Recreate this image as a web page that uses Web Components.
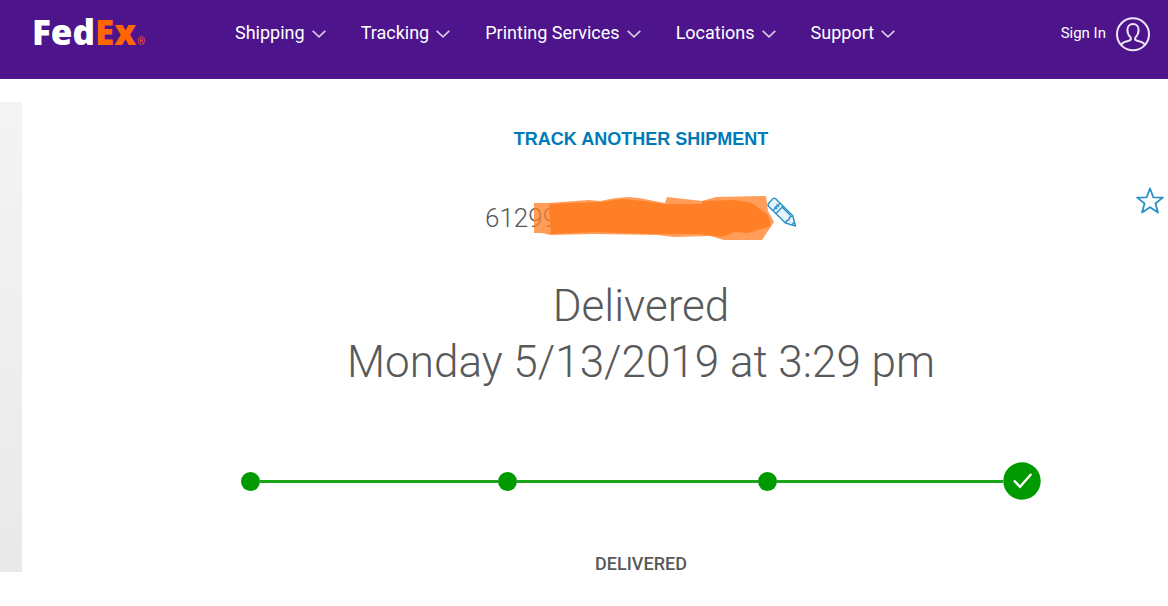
<!DOCTYPE html>
<html lang="en">
<head>
<meta charset="utf-8">
<meta name="viewport" content="width=device-width, initial-scale=1">
<title>FedEx Tracking</title>
<style>
body { margin: 0; background: #fff; color: #58595b; font-family: Roboto, "Liberation Sans", sans-serif; }
</style>
</head>
<body>
<tracking-page></tracking-page>
<script>
const define = (name, html) => customElements.define(name, class extends HTMLElement {
  constructor() {
    super();
    this.attachShadow({ mode: 'open' }).innerHTML = html;
  }
});

define('brand-logo', `
<style>
:host { display: block; }
a { display: flex; align-items: baseline; color: #fff; text-decoration: none; font: 800 35px/40px "Open Sans", sans-serif; }
.ex, small { color: #f60; }
small { font: 400 10px/12px Roboto, sans-serif; margin-left: 1px; }
</style>
<a href="#"><span>Fed</span><span class="ex">Ex</span><small>®</small></a>`);

define('nav-item', `
<style>
:host { display: block; }
button { display: flex; align-items: center; gap: 7px; margin: 0; padding: 0; border: 0; background: none; color: #fff; font: 400 18px/24px Roboto, sans-serif; white-space: nowrap; cursor: pointer; }
svg { display: block; margin-top: 2px; }
</style>
<button type="button"><slot></slot><svg width="14" height="8" viewBox="0 0 14 8" fill="none" stroke="#d8cbe6" stroke-width="1.6" aria-hidden="true"><path d="M.7.8 7 6.8 13.3.8"/></svg></button>`);

define('sign-in', `
<style>
:host { display: block; margin-left: auto; }
a { display: flex; align-items: flex-start; gap: 10px; color: #fff; text-decoration: none; font: 400 15px/32px Roboto, sans-serif; white-space: nowrap; }
svg { display: block; }
</style>
<a href="#"><slot></slot><svg width="34" height="35" viewBox="0 0 34 35" fill="none" stroke="#ece5f3" stroke-width="2" aria-hidden="true"><circle cx="17" cy="17.3" r="16"/><path d="M5 28.300C6.200 24.800 9 24.600 12 24C15 23.400 15.600 22.200 14.500 20.400C12.300 18.200 11.400 15.800 11.400 13C11.400 9.300 13.700 7 17 7s5.600 2.300 5.600 6c0 2.800-.9 5.200-3.100 7.400-1.100 1.800-.5 3 2.500 3.600 3 .6 5.800.8 7 4.300"/></svg></a>`);

define('site-header', `
<style>
:host { display: flex; align-items: flex-start; box-sizing: border-box; min-height: 79px; padding: 12px 18px 0 32px; background: #4d148c; }
nav { display: flex; gap: 35px; margin-top: 9px; }
brand-logo { flex: 0 0 203px; }
sign-in { margin-top: 5px; }
</style>
<brand-logo></brand-logo>
<nav aria-label="Main">
<nav-item>Shipping</nav-item><nav-item>Tracking</nav-item><nav-item>Printing Services</nav-item><nav-item>Locations</nav-item><nav-item>Support</nav-item>
</nav>
<sign-in>Sign In</sign-in>`);

define('tracking-number', `
<style>
:host { display: flex; justify-content: space-between; position: relative; width: 312px; height: 46px; margin: 0 auto; }
span { font: 300 26px/44px Roboto, sans-serif; }
.mask { position: absolute; left: 49px; top: 0; }
button { position: relative; align-self: flex-start; padding: 0; border: 0; background: none; cursor: pointer; }
svg { display: block; }
</style>
<span><slot></slot></span>
<svg class="mask" width="240" height="46" viewBox="0 0 240 46" aria-hidden="true">
<path fill="#ff7f27" fill-opacity=".77" d="M0 7H14L55 4 66 5 82 2 95 1 105 2 131 7 133 1 168 5 182 1 232 0 234 15 240 26 228 44H190L176 40 140 41 123 39 60 38 16 39 8 37 0 37Z"/>
<path fill="#ff7f27" d="M15 8 40 7 68 6 88 3 110 5 130 8 168 8V5L200 4 218 7 234 19 237 30 214 37 201 36 188 41 165 38 122 38 60 36 17 38Z"/>
</svg>
<button type="button" aria-label="Edit nickname"><svg width="30" height="32" viewBox="0 0 30 32" fill="none" stroke="#2b8fc7" stroke-width="1.4" stroke-linejoin="round" aria-hidden="true"><path fill="#e6f3fa" d="M1.500 7.500 6 2.600Q7.400 1.600 8.600 2.800L25.800 19.700 28.500 30 18.700 27.200 1.700 10.400Q.4 9 1.500 7.500Z"/><path d="M6 14.500 13 7.200M9 17.500 16 10.300M7.500 10.500 10 13M9.500 8.500 12 11M15 11 23.500 19.500M18.700 27.200Q18.500 24.700 21.800 23.900 22 20.500 25.800 19.700M24.600 28.900 27.500 26.100"/></svg></button>`);

define('favorite-button', `
<style>
:host { display: block; }
button { display: block; padding: 0; border: 0; background: none; cursor: pointer; }
svg { display: block; }
</style>
<button type="button" aria-label="Add to watch list"><svg width="28" height="28" viewBox="0 0 28 28" fill="none" stroke="#2b8fc7" stroke-width="1.8" stroke-linejoin="round" aria-hidden="true"><path d="M14 1.500 17.300 10.300 26.800 10.600 19.400 16.500 22 25.500 14 20.200 6 25.500 8.600 16.500 1.200 10.600 10.700 10.300Z"/></svg></button>`);

define('shipment-progress', `
<style>
:host { display: flex; align-items: center; max-width: 800px; margin: 0 auto; }
i { flex: none; width: 19px; height: 19px; border-radius: 50%; background: #090; }
b { flex: 238 1 0; height: 3px; background: #1ba51b; }
b.second { flex-grow: 242; }
b.last { flex-grow: 226; }
svg { flex: none; display: block; }
</style>
<i></i><b></b><i></i><b class="second"></b><i></i><b class="last"></b>
<svg width="38" height="38" viewBox="0 0 38 38" role="img" aria-label="Delivered"><circle cx="19" cy="19" r="18.700" fill="#090"/><path d="M11 18.500 17 24.800 28.300 12" fill="none" stroke="#fff" stroke-width="2.400"/></svg>`);

define('tracking-page', `
<style>
:host { display: block; }
.body { display: flex; padding: 23px 0 34px; }
aside { flex: 0 0 22px; background: linear-gradient(#f4f4f4, #e9e9e9); }
main { flex: 1; box-sizing: border-box; padding: 26px 0 0 92px; text-align: center; }
.track { display: block; width: fit-content; margin: 0 auto 46px; color: #007ab7; text-decoration: none; font: 700 18px/22px "Liberation Sans", sans-serif; }
.number { display: grid; grid-template-columns: 1fr; align-items: start; }
.number > * { grid-area: 1 / 1; }
favorite-button { justify-self: end; margin-right: 4px; margin-top: -9px; }
h1 { margin: 36px 0 72px; font: 300 44px/56px Roboto, sans-serif; }
h1 span { display: block; }
h2 { margin: 56px 0 0; font: 500 18px/16px Roboto, sans-serif; }
</style>
<site-header></site-header>
<div class="body">
<aside></aside>
<main>
<a class="track" href="#">TRACK ANOTHER SHIPMENT</a>
<div class="number"><tracking-number>61299</tracking-number><favorite-button></favorite-button></div>
<h1><span>Delivered</span><span>Monday 5/13/2019 at 3:29 pm</span></h1>
<shipment-progress></shipment-progress>
<h2>DELIVERED</h2>
</main>
</div>`);
</script>
</body>
</html>
